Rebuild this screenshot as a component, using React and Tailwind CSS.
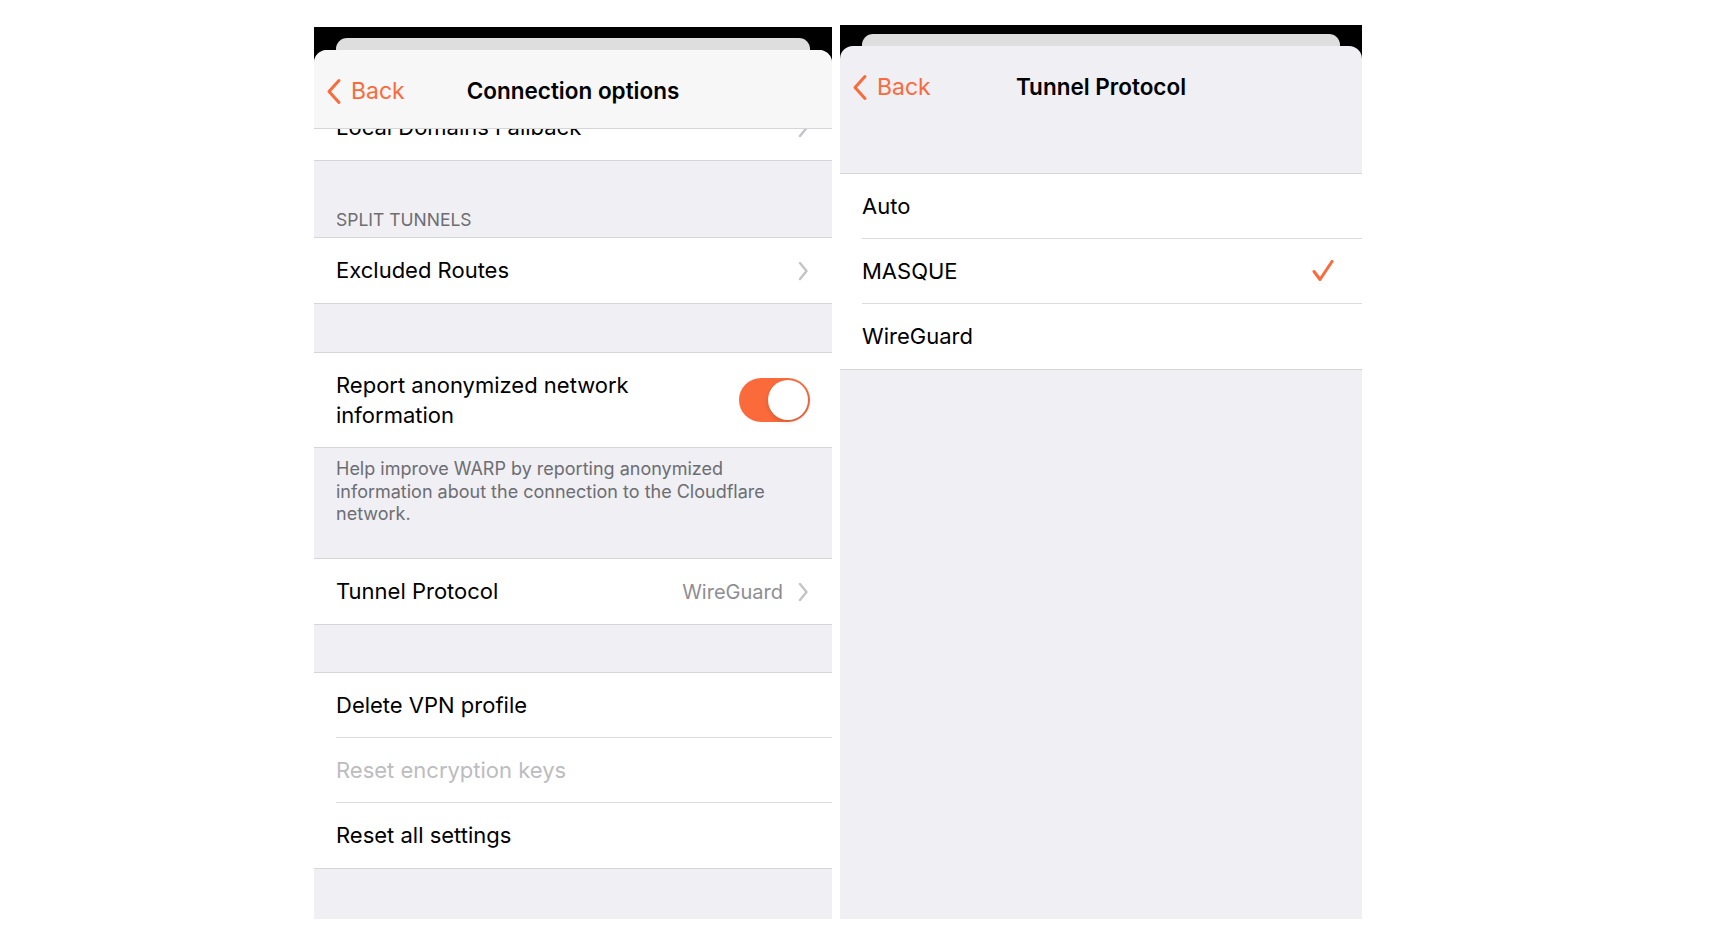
import React from "react";

const ORANGE = "#fb6a3a";

function BackChevron() {
  return (
    <svg width="16" height="27" viewBox="0 0 16 27" fill="none">
      <path
        d="M13 2.5 L3 13.5 L13 24.5"
        stroke={ORANGE}
        strokeWidth="3"
        strokeLinecap="round"
        strokeLinejoin="round"
      />
    </svg>
  );
}

function Disclosure() {
  return (
    <svg width="10" height="20" viewBox="0 0 10 20" fill="none">
      <path
        d="M2 2 L8.5 10 L2 18"
        stroke="#c4c4c8"
        strokeWidth="2.4"
        strokeLinecap="round"
        strokeLinejoin="round"
      />
    </svg>
  );
}

function Check() {
  return (
    <svg width="22" height="22" viewBox="0 0 22 22" fill="none" className="mr-[4px]">
      <path
        d="M2 11.5 L8 19.5 L20 1.5"
        stroke={ORANGE}
        strokeWidth="3"
        strokeLinecap="round"
        strokeLinejoin="round"
      />
    </svg>
  );
}

function Toggle() {
  return (
    <div className="flex h-[44px] w-[71px] shrink-0 items-center justify-end rounded-full bg-[#fb6a3a] p-[2px]">
      <div className="h-[40px] w-[40px] rounded-full bg-white shadow-[0_2px_4px_rgba(0,0,0,0.15)]" />
    </div>
  );
}

function Row({ label, value, chevron, check, muted, inset, last }) {
  return (
    <div className="flex h-[65px] items-stretch bg-white">
      <div
        className={`flex flex-1 items-center pr-[24px] ${inset ? "ml-[22px]" : "pl-[22px]"} ${
          last ? "" : "border-b border-[#dcdcdf]"
        }`}
      >
        <span className={`flex-1 text-[22px] ${muted ? "text-[#bcbcc0]" : "text-black"}`}>
          {label}
        </span>
        {value && <span className="mr-[15px] text-[20px] text-[#8e8e93]">{value}</span>}
        {chevron && <Disclosure />}
        {check && <Check />}
      </div>
    </div>
  );
}

function Group({ children }) {
  return <div className="border-y border-[#d6d6da] bg-white">{children}</div>;
}

function SheetTop({ pt }) {
  return (
    <div className={`bg-black ${pt}`}>
      <div className="mx-[22px] h-[13px] rounded-t-[11px] bg-[#dedede]" />
    </div>
  );
}

function NavTitle({ children }) {
  return (
    <>
      <div className="flex w-[150px] items-center gap-[9px] pl-[12px] text-[23px] text-[#fb6a3a]">
        <BackChevron />
        <span>Back</span>
      </div>
      <div className="flex-1 pr-[150px] text-center text-[22.5px] font-semibold text-black">
        {children}
      </div>
    </>
  );
}

function ConnectionOptions() {
  return (
    <div className="mt-[27px] flex h-[892px] w-[518px] flex-col">
      <SheetTop pt="pt-[11px]" />
      <div className="-mt-px flex flex-1 flex-col overflow-hidden bg-black">
        <div className="flex flex-1 flex-col overflow-hidden rounded-t-[13px] bg-[#efeff4]">
          <div className="relative z-10 flex h-[79px] shrink-0 items-center border-b border-[#d6d6da] bg-[#f7f7f7] pt-[4px]">
            <NavTitle>Connection options</NavTitle>
          </div>

          <div className="-mt-[34px]">
            <div className="border-b border-[#d6d6da]">
              <Row label="Local Domains Fallback" chevron last />
            </div>

            <div className="px-[22px] pb-[4px] pt-[46px] text-[17.5px] uppercase text-[#6d6d72]">
              Split Tunnels
            </div>
            <Group>
              <Row label="Excluded Routes" chevron last />
            </Group>

            <div className="h-[48px]" />

            <Group>
              <div className="flex h-[94px] items-center gap-[20px] pl-[22px] pr-[22px]">
                <div className="flex-1 text-[22px] leading-[30px] text-black">
                  Report anonymized network information
                </div>
                <Toggle />
              </div>
            </Group>

            <div className="h-[110px] pl-[22px] pr-[40px] pt-[10px] text-[18px] leading-[22.5px] text-[#6d6d72]">
              Help improve WARP by reporting anonymized information about the connection to the
              Cloudflare network.
            </div>

            <Group>
              <Row label="Tunnel Protocol" value="WireGuard" chevron last />
            </Group>

            <div className="h-[47px]" />

            <Group>
              <Row label="Delete VPN profile" inset />
              <Row label="Reset encryption keys" muted inset />
              <Row label="Reset all settings" inset last />
            </Group>
          </div>
        </div>
      </div>
    </div>
  );
}

function TunnelProtocol() {
  return (
    <div className="mt-[25px] flex h-[894px] w-[522px] flex-col">
      <SheetTop pt="pt-[9px]" />
      <div className="-mt-px flex flex-1 flex-col overflow-hidden bg-black">
        <div className="flex flex-1 flex-col overflow-hidden rounded-t-[13px] bg-[#efeff4]">
          <div className="flex h-[80px] shrink-0 items-center pt-[2px]">
            <NavTitle>Tunnel Protocol</NavTitle>
          </div>
          <div className="h-[47px]" />
          <Group>
            <Row label="Auto" inset />
            <Row label="MASQUE" check inset />
            <Row label="WireGuard" inset last />
          </Group>
        </div>
      </div>
    </div>
  );
}

export default function App() {
  return (
    <div
      className="flex h-[930px] w-[1710px] items-start gap-[8px] overflow-hidden bg-white pl-[314px]"
      style={{ fontFamily: "Inter, 'Liberation Sans', sans-serif" }}
    >
      <ConnectionOptions />
      <TunnelProtocol />
    </div>
  );
}
